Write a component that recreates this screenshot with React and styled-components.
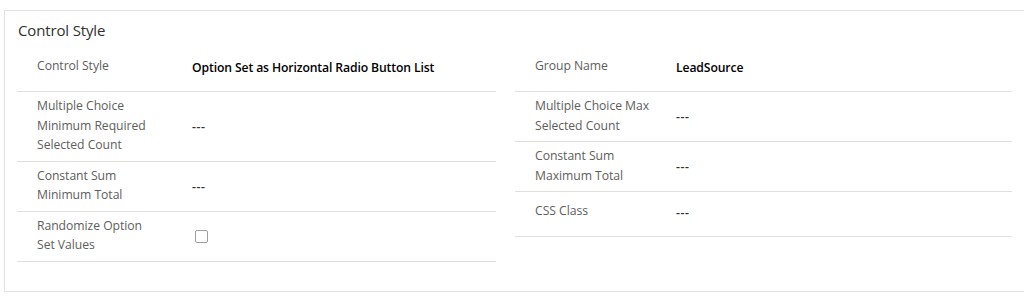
import React from 'react'
import styled, { createGlobalStyle } from 'styled-components'

const GlobalStyle = createGlobalStyle`
  body {
    margin: 0;
    background: #fff;
    overflow: hidden;
    font-family: "Open Sans", "Noto Sans", sans-serif;
  }
`

const Page = styled.div`
  padding: 10px 0 0 4px;
`

const Card = styled.section`
  width: 1030px;
  height: 282px;
  box-sizing: border-box;
  border: 1px solid #e1e1e1;
  background: #fff;
  padding: 0 14px 0 12px;
`

const Title = styled.h2`
  margin: 0;
  padding: 9px 0 0 1px;
  height: 36px;
  box-sizing: border-box;
  font-size: 15px;
  font-weight: 400;
  line-height: 20px;
  letter-spacing: -0.15px;
  color: #323130;
`

const Columns = styled.div`
  display: grid;
  grid-template-columns: 479px 497px;
  column-gap: 19px;
  align-items: start;
`

const Column = styled.div`
  display: flex;
  flex-direction: column;
`

const Row = styled.div`
  display: grid;
  grid-template-columns: ${p => p.$labelWidth}px 1fr;
  min-height: 45px;
  box-sizing: border-box;
  border-bottom: 1px solid #e1dfdd;
  padding-left: 20px;
`

const Label = styled.div`
  padding: ${p => (p.$lines === 1 ? '9px' : '4px')} 8px 6px 0;
  font-size: 12.2px;
  line-height: 19.5px;
  letter-spacing: -0.05px;
  color: #605e5c;
`

const Value = styled.div`
  display: flex;
  align-items: center;
  padding-bottom: ${p => (p.$lines === 1 ? '4px' : '0')};
  font-size: 12.2px;
  font-weight: 600;
  letter-spacing: -0.12px;
  color: #000;
`

const Empty = styled(Value)`
  letter-spacing: 0.6px;
  color: #323130;
`

const Checkbox = styled.span`
  display: inline-block;
  width: 11px;
  height: 11px;
  margin-left: 3px;
  border: 1px solid #a19f9d;
  border-radius: 2px;
  background: #fff;
`

const left = [
  { label: ['Control Style'], value: 'Option Set as Horizontal Radio Button List' },
  { label: ['Multiple Choice', 'Minimum Required', 'Selected Count'] },
  { label: ['Constant Sum', 'Minimum Total'] },
  { label: ['Randomize Option', 'Set Values'], checkbox: true },
]

const right = [
  { label: ['Group Name'], value: 'LeadSource' },
  { label: ['Multiple Choice Max', 'Selected Count'] },
  { label: ['Constant Sum', 'Maximum Total'] },
  { label: ['CSS Class'] },
]

const Field = ({ item, labelWidth }) => {
  const lines = item.label.length
  return (
    <Row $labelWidth={labelWidth}>
      <Label $lines={lines}>
        {item.label.map((l, i) => (
          <div key={i}>{l}</div>
        ))}
      </Label>
      {item.checkbox ? (
        <Value $lines={lines}><Checkbox /></Value>
      ) : item.value ? (
        <Value $lines={lines}>{item.value}</Value>
      ) : (
        <Empty $lines={lines}>---</Empty>
      )}
    </Row>
  )
}

export default function App() {
  return (
    <Page>
      <GlobalStyle />
      <Card>
        <Title>Control Style</Title>
        <Columns>
          <Column>
            {left.map((item, i) => (
              <Field key={i} item={item} labelWidth={155} />
            ))}
          </Column>
          <Column>
            {right.map((item, i) => (
              <Field key={i} item={item} labelWidth={141} />
            ))}
          </Column>
        </Columns>
      </Card>
    </Page>
  )
}
